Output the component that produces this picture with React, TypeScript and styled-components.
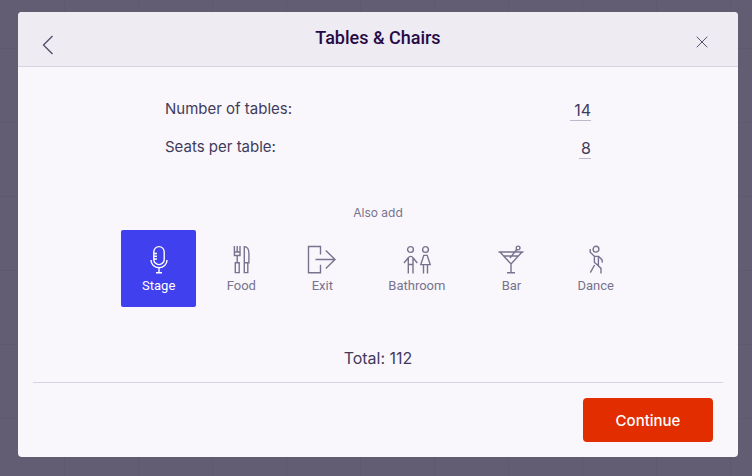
import React, { useState } from "react";
import styled, { createGlobalStyle } from "styled-components";

const colors = {
  backdrop: "#635d74",
  grid: "#5f5970",
  panel: "#f9f7fb",
  header: "#eeebf2",
  line: "#d8d5e3",
  title: "#270a45",
  text: "#413b5b",
  muted: "#77738f",
  selected: "#4040ee",
  action: "#e12d00",
};

const GlobalStyle = createGlobalStyle`
  *, *::before, *::after { box-sizing: border-box; }
  body {
    margin: 0;
    background: ${colors.backdrop};
    font-family: Inter, "Liberation Sans", sans-serif;
    color: ${colors.text};
  }
  button, input { font: inherit; color: inherit; }
`;

const Backdrop = styled.div`
  min-height: 100vh;
  padding: 12px 14px 19px 18px;
  background-color: ${colors.backdrop};
  background-image: linear-gradient(${colors.grid} 1px, transparent 1px),
    linear-gradient(90deg, ${colors.grid} 1px, transparent 1px);
  background-size: 74px 74px;
  background-position: 64px 48px;
`;

const Dialog = styled.section`
  background: ${colors.panel};
  border-radius: 4px;
  overflow: hidden;
`;

const Header = styled.header`
  display: grid;
  grid-template-columns: 30px 1fr 30px;
  align-items: center;
  height: 55px;
  padding: 0 21px 0 15px;
  background: ${colors.header};
  border-bottom: 1px solid ${colors.line};
`;

const Title = styled.h1`
  margin: 0;
  padding: 0 0 2px 6px;
  font: 500 18px/24px Roboto, sans-serif;
  text-align: center;
  color: ${colors.title};
`;

const IconButton = styled.button`
  display: flex;
  align-items: center;
  justify-content: center;
  height: 32px;
  padding: 6px 0 0;
  border: 0;
  background: none;
  color: #56506c;
  cursor: pointer;
`;

const BackButton = styled(IconButton)`
  padding: 12px 0 0;
`;

const Fields = styled.div`
  display: grid;
  gap: 14px;
  max-width: 426px;
  margin: 0 auto;
  padding: 30px 0 46px;
`;

const Field = styled.div`
  display: flex;
  justify-content: space-between;
  align-items: center;
  height: 24px;
  font-size: 15px;
  line-height: 24px;
`;

const NumberInput = styled.input<{ $digits: number }>`
  width: ${(p) => p.$digits * 9 + 3}px;
  height: 24px;
  padding: 2px 0 0;
  border: 0;
  border-bottom: 1px solid #bdb9cd;
  border-radius: 0;
  background: none;
  font-size: 16px;
  line-height: 20px;
  text-align: right;
  outline: none;
`;

const Caption = styled.p`
  margin: 0 0 9px;
  font-size: 12px;
  line-height: 16px;
  text-align: center;
  color: ${colors.muted};
`;

const Options = styled.div`
  display: flex;
  flex-wrap: wrap;
  justify-content: center;
  gap: 9px;
`;

const Option = styled.button<{ $selected: boolean }>`
  display: flex;
  flex-direction: column;
  align-items: center;
  gap: 2px;
  height: 77px;
  padding: 15px 21px 12px;
  border: 0;
  border-radius: 2px;
  background: ${(p) => (p.$selected ? colors.selected : "transparent")};
  color: ${(p) => (p.$selected ? "#fff" : colors.muted)};
  font: 400 13px/18px Roboto, sans-serif;
  cursor: pointer;
`;

const Glyph = styled.svg`
  display: block;
  flex: none;
  fill: none;
  stroke: currentColor;
  stroke-width: 1.4;
`;

const Total = styled.output`
  display: block;
  padding: 41px 0 14px;
  font-size: 16px;
  line-height: 20px;
  text-align: center;
`;

const Footer = styled.footer`
  display: flex;
  justify-content: flex-end;
  margin: 0 15px;
  padding: 15px 10px;
  border-top: 1px solid ${colors.line};
`;

const Continue = styled.button`
  width: 130px;
  height: 44px;
  padding: 0;
  border: 0;
  border-radius: 4px;
  background: ${colors.action};
  color: #fff;
  font-size: 15px;
  font-weight: 500;
  cursor: pointer;
`;

const drawings: Record<string, React.ReactNode> = {
  Stage: (
    <>
      <rect x="9.8" y="1.6" width="10.4" height="18" rx="5.2" />
      <path d="M10 8.5h3M10 11.2h3M10 14h3M7 15c0 4.5 3.5 7.7 8 7.7s8-3.2 8-7.7M15 22.7v5M12 27.8h6" />
    </>
  ),
  Food: (
    <>
      <path d="M8.4 1v9.5h5.6V1M11.2 1v6M8.4 7h5.6M11.2 10.5v7M9.3 17.8h3.9v9.8H9.3z" />
      <path d="M18.3 1.6v16.2h4.6V8.5c0-4.3-2-6.9-4.6-6.9zM18.3 17.8h3.5v9.8h-3.5z" />
    </>
  ),
  Exit: (
    <path d="M13.5 9.5v-8h-12v26.2h12v-8M8.5 14.5h19.5M18.8 5.5l9.2 9-9.2 9" />
  ),
  Bathroom: (
    <>
      <circle cx="8.5" cy="4.5" r="2.9" />
      <circle cx="23.5" cy="4.5" r="2.9" />
      <path d="M2 18l4.3-5.2c1.2-1.9 3.5-1.9 4.7 0l4.3 5.2M6.3 13v15.5M11 13v15.5M6.3 19.5H11" />
      <path d="M21.8 10.4h3.4l3 9.2h-9.4zM21.5 19.6v8.9M25.5 19.6v8.9" />
    </>
  ),
  Bar: (
    <>
      <path d="M2.5 7h25M4 7l11 12L26 7M7.8 11h14.4M15 19v8.6M11 27.7h8M20.7 4.5L14 13" />
      <circle cx="22.1" cy="3" r="1.9" />
    </>
  ),
  Dance: (
    <>
      <circle cx="15" cy="4.2" r="2.9" />
      <path d="M9.2 4v3.2l4.2 4v6.3l4 3.2v-9.3h-3.8M17.4 11.3l3.5 3.4.5 3M13.6 20l-4.3 7.7M16.7 20.2l3.3 3.2v5" />
    </>
  ),
};

const names = Object.keys(drawings);

export default function App() {
  const [tables, setTables] = useState("14");
  const [seats, setSeats] = useState("8");
  const [chosen, setChosen] = useState<string[]>(["Stage"]);

  const toggle = (name: string) =>
    setChosen((prev) =>
      prev.includes(name) ? prev.filter((n) => n !== name) : [...prev, name]
    );

  return (
    <>
      <GlobalStyle />
      <Backdrop>
        <Dialog role="dialog" aria-labelledby="dialog-title">
          <Header>
            <BackButton type="button" aria-label="Back">
              <Glyph width="12" height="20" viewBox="0 0 12 20">
                <path d="M10.5 1L1.5 10l9 9" />
              </Glyph>
            </BackButton>
            <Title id="dialog-title">Tables &amp; Chairs</Title>
            <IconButton type="button" aria-label="Close">
              <Glyph width="12" height="12" viewBox="0 0 12 12">
                <path d="M.7.7l10.6 10.6M11.3.7L.7 11.3" strokeWidth="1" />
              </Glyph>
            </IconButton>
          </Header>

          <Fields>
            <Field>
              <label htmlFor="tables">Number of tables:</label>
              <NumberInput
                id="tables"
                inputMode="numeric"
                value={tables}
                $digits={tables.length}
                onChange={(e) => setTables(e.target.value)}
              />
            </Field>
            <Field>
              <label htmlFor="seats">Seats per table:</label>
              <NumberInput
                id="seats"
                inputMode="numeric"
                value={seats}
                $digits={seats.length}
                onChange={(e) => setSeats(e.target.value)}
              />
            </Field>
          </Fields>

          <Caption>Also add</Caption>
          <Options>
            {names.map((name) => (
              <Option
                key={name}
                type="button"
                $selected={chosen.includes(name)}
                aria-pressed={chosen.includes(name)}
                onClick={() => toggle(name)}
              >
                <Glyph width="30" height="30" viewBox="0 0 30 30">
                  {drawings[name]}
                </Glyph>
                {name}
              </Option>
            ))}
          </Options>

          <Total>Total: {Number(tables) * Number(seats)}</Total>
          <Footer>
            <Continue type="button">Continue</Continue>
          </Footer>
        </Dialog>
      </Backdrop>
    </>
  );
}
